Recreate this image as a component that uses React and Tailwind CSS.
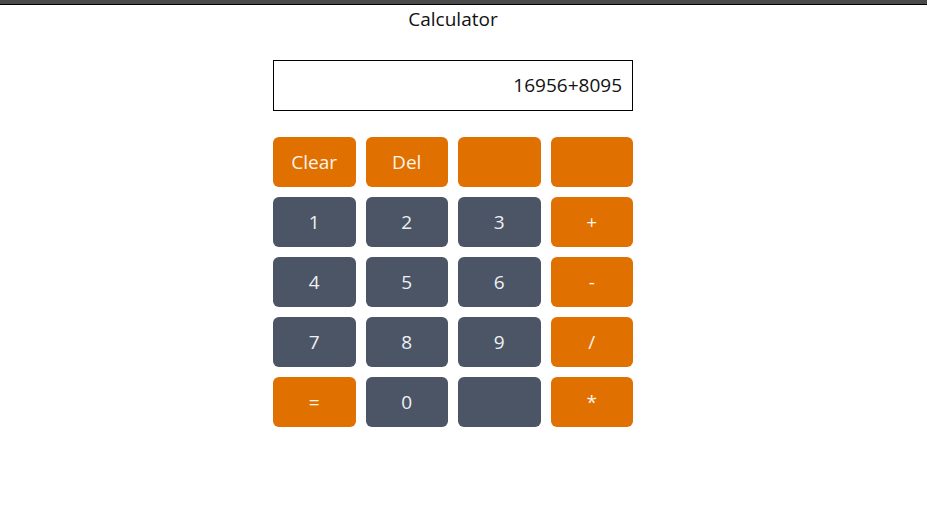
import React from "react";

const rows = [
  [["Clear", "o"], ["Del", "o"], ["", "o"], ["", "o"]],
  [["1", "s"], ["2", "s"], ["3", "s"], ["+", "o"]],
  [["4", "s"], ["5", "s"], ["6", "s"], ["-", "o"]],
  [["7", "s"], ["8", "s"], ["9", "s"], ["/", "o"]],
  [["=", "o"], ["0", "s"], ["", "s"], ["*", "o"]],
];

export default function App() {
  return (
    <div className="min-h-[522px] bg-white" style={{ fontFamily: '"Open Sans", "Noto Sans", sans-serif' }}>
      <div className="h-[5px] bg-[#4a4a4a] border-b border-black" />
      <div className="w-[906px] flex flex-col items-center">
        <h1 className="text-[19px] leading-[28px] text-[#111]">Calculator</h1>
        <div className="mt-[27px] w-[360px] h-[51px] border border-black flex items-center justify-end pr-[10px] text-[19px] text-[#111]">
          16956+8095
        </div>
        <div className="mt-[26px] w-[360px] grid grid-cols-4 gap-[10px]">
          {rows.flat().map(([label, kind], i) => (
            <button
              key={i}
              className={
                kind === "o"
                  ? "h-[50px] rounded-[6px] bg-[#e07000] text-[#fdf4ea] text-[19px]"
                  : "h-[50px] rounded-[6px] bg-[#4b5565] text-[#eef0f3] text-[19px]"
              }
            >
              {label}
            </button>
          ))}
        </div>
      </div>
    </div>
  );
}
